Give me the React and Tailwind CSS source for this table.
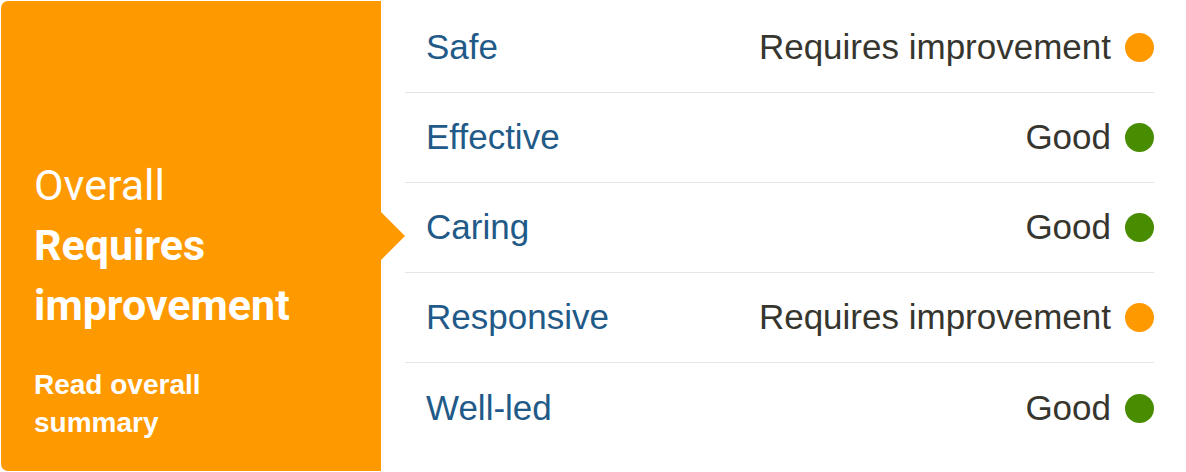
const ratings = [
  { name: "Safe", rating: "Requires improvement", color: "orange" },
  { name: "Effective", rating: "Good", color: "green" },
  { name: "Caring", rating: "Good", color: "green" },
  { name: "Responsive", rating: "Requires improvement", color: "orange" },
  { name: "Well-led", rating: "Good", color: "green" },
];

export default function App() {
  return (
    <div className="w-[1186px] h-[472px] bg-white flex pt-[1px] pl-[1px]">
      {/* Overall panel */}
      <div className="relative w-[380px] h-[470px] bg-[#FF9900] rounded-l-[7px] flex flex-col justify-end pl-[33px] pb-[29px] text-white shrink-0">
        <div className="text-[43px] leading-[60px] font-['Roboto',sans-serif]">
          <div className="font-normal">Overall</div>
          <div className="font-bold">Requires improvement</div>
        </div>
        <div className="mt-[31px] text-[28px] leading-[38px] font-bold font-['Liberation_Sans',Arial,sans-serif] w-[220px]">
          Read overall summary
        </div>
        <div className="absolute left-full top-[211px] w-0 h-0 border-l-[24px] border-l-[#FF9900] border-y-[24px] border-y-transparent" />
      </div>

      {/* Key questions */}
      <div className="ml-[24px] w-[749px] pt-[2px] flex flex-col font-['Liberation_Sans',Arial,sans-serif] text-[35px]">
        {ratings.map((r, i) => (
          <div
            key={r.name}
            className={`h-[90px] flex items-center justify-between pl-[21px] ${
              i < ratings.length - 1 ? "border-b border-[#E8E4E0]" : ""
            }`}
          >
            <span className="text-[#1F5A88]">{r.name}</span>
            <span className="flex items-center gap-[14px] text-[#36362F]">
              {r.rating}
              <span
                className={`w-[29px] h-[29px] rounded-full ${
                  r.color === "orange" ? "bg-[#FF9900]" : "bg-[#488C00]"
                }`}
              />
            </span>
          </div>
        ))}
      </div>
    </div>
  );
}
